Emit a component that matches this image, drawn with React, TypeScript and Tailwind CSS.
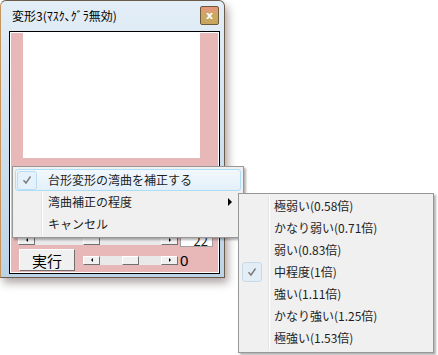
import React from "react";

const FONT = { fontFamily: '"Noto Sans CJK JP", "Noto Sans", sans-serif' };

function Check() {
  return (
    <svg width="10" height="10" viewBox="0 0 10 10">
      <path d="M1.5 5.2 L4 8 L8.5 1.5" fill="none" stroke="#7a7a7a" strokeWidth="1.4" />
    </svg>
  );
}

function ScrollBar({ width, thumb }: { width: number; thumb: number }) {
  const btn =
    "w-[17px] h-full bg-[#f0f0f0] border border-t-white border-l-white border-r-[#707070] border-b-[#707070] flex items-center justify-center";
  return (
    <div className="flex h-[9px] relative bg-[#e9e9e9]" style={{ width }}>
      <div className={btn}>
        <div className="w-0 h-0 border-y-[2px] border-y-transparent border-r-[2px] border-r-black" />
      </div>
      <div className="flex-1" />
      <div className={btn}>
        <div className="w-0 h-0 border-y-[2px] border-y-transparent border-l-[2px] border-l-black" />
      </div>
      <div
        className="absolute top-0 h-full w-[17px] bg-[#f0f0f0] border border-t-white border-l-white border-r-[#707070] border-b-[#707070]"
        style={{ left: thumb }}
      />
    </div>
  );
}

export default function App() {
  const sub = [
    "極弱い(0.58倍)",
    "かなり弱い(0.71倍)",
    "弱い(0.83倍)",
    "中程度(1倍)",
    "強い(1.11倍)",
    "かなり強い(1.25倍)",
    "極強い(1.53倍)",
  ];
  return (
    <div className="relative w-[438px] h-[355px] bg-white overflow-hidden text-[#1e1e1e]" style={FONT}>
      {/* window */}
      <div className="w-[225px] h-[278px] rounded-t-[6px] border border-[#6b5a4a] border-l-[#c8945e] bg-gradient-to-b from-[#e3eef7] via-[#cfe0ee] to-[#bcd3e6] shadow-[3px_5px_8px_rgba(80,60,60,0.45)] flex flex-col">
        <div className="h-[30px] flex items-center justify-between pl-[11px] pr-[5px]">
          <span className="text-[12px] leading-none text-black">変形3(ﾏｽｸ､ｸﾞﾗ無効)</span>
          <div className="w-[19px] h-[19px] mt-[-2px] rounded-[2px] border border-[#6e5a3a] bg-gradient-to-b from-[#e8947e] via-[#c8a862] to-[#c9a660] flex items-center justify-center">
            <span className="text-white text-[11px] font-bold leading-none" style={{ fontFamily: '"DejaVu Sans", sans-serif' }}>x</span>
          </div>
        </div>
        <div className="ml-[8px] w-[211px] h-[243px] border border-black">
          <div className="w-full h-full border border-white bg-[#e8b8b9] flex flex-col">
            <div className="ml-[12px] w-[177px] h-[125px] bg-white" />
            <div className="flex-1" />
            <div className="flex items-center h-[16px] ml-[7px]">
              <ScrollBar width={160} thumb={65} />
              <div className="ml-[2px] w-[33px] h-[14px] bg-white border border-[#a0a0a0] text-[13px] leading-[14px] text-right pr-[4px]">22</div>
            </div>
            <div className="flex items-center mt-[1px] mb-[1px] ml-[8px] h-[22px]">
              <div className="w-[56px] h-[22px] bg-[#f0f0f0] border border-t-white border-l-white border-r-[#707070] border-b-[#707070] flex items-center justify-center text-[15px] text-black leading-none">
                実行
              </div>
              <div className="ml-[8px]">
                <ScrollBar width={95} thumb={39} />
              </div>
              <span className="ml-[2px] text-[15px] leading-none text-black" style={{ fontFamily: '"Liberation Sans", sans-serif' }}>0</span>
            </div>
          </div>
        </div>
      </div>

      {/* context menu */}
      <div className="absolute left-[12px] top-[166px] w-[232px] h-[72px] bg-[#f0f0f0] border border-[#979797] shadow-[2px_2px_2px_rgba(0,0,0,0.3)] pt-[2px] px-[2px] text-[12px]">
        <div className="absolute left-[28px] top-[2px] bottom-[2px] w-[2px] border-l border-[#e2e3e3] bg-white" />
        <div className="relative h-[22px] flex items-center rounded-[3px] border border-[#aeddf6] bg-gradient-to-b from-[#f2f8fd] to-[#e3f0fa]">
          <div className="ml-[1px] w-[20px] h-[19px] rounded-[3px] border border-[#b9dcf2] bg-[#e6f2fb] flex items-center justify-center">
            <Check />
          </div>
          <span className="ml-[11px]">台形変形の湾曲を補正する</span>
        </div>
        <div className="relative h-[22px] flex items-center">
          <span className="ml-[33px]">湾曲補正の程度</span>
          <div className="absolute right-[9px] w-0 h-0 border-y-[4px] border-y-transparent border-l-[4px] border-l-black" />
        </div>
        <div className="relative h-[22px] flex items-center">
          <span className="ml-[33px]">キャンセル</span>
        </div>
      </div>

      {/* submenu */}
      <div className="absolute left-[238px] top-[193px] w-[196px] h-[160px] bg-[#f0f0f0] border border-[#979797] shadow-[2px_2px_2px_rgba(0,0,0,0.3)] pt-[1px] px-[2px] text-[12px]">
        <div className="absolute left-[29px] top-[2px] bottom-[2px] w-[2px] border-l border-[#e2e3e3] bg-white" />
        {sub.map((t, i) => (
          <div key={i} className="relative h-[22px] flex items-center">
            {i === 3 ? (
              <div className="absolute left-[1px] w-[20px] h-[20px] rounded-[3px] border border-[#c6d9e8] bg-[#e3edf6] flex items-center justify-center">
                <Check />
              </div>
            ) : null}
            <span className="ml-[33px]">{t}</span>
          </div>
        ))}
      </div>
    </div>
  );
}
